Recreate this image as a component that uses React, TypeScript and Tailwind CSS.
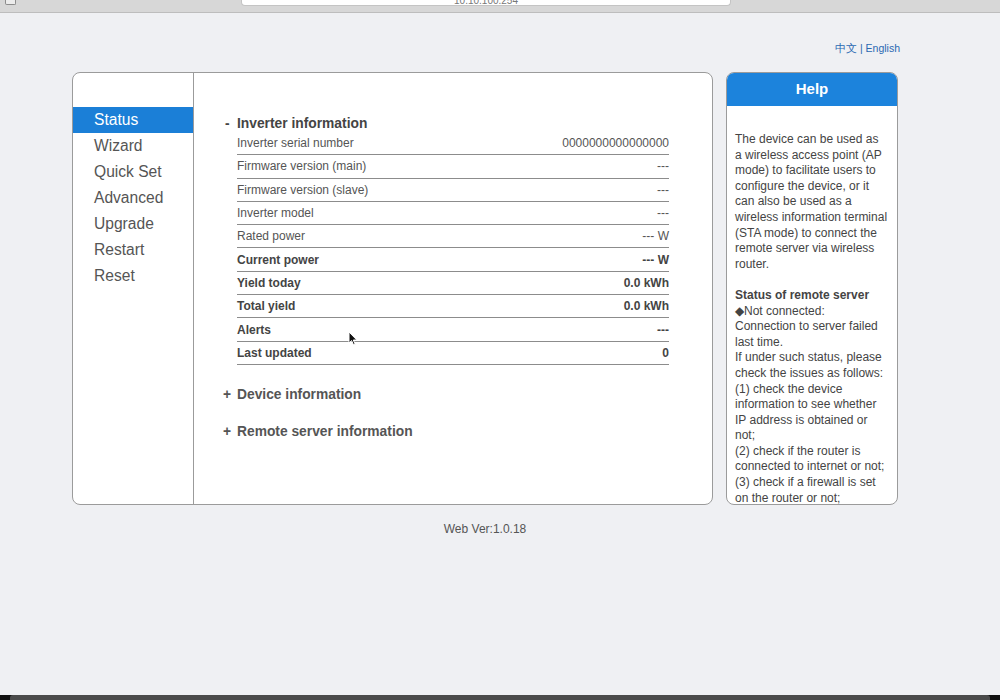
import React from 'react'

const menu = ['Status', 'Wizard', 'Quick Set', 'Advanced', 'Upgrade', 'Restart', 'Reset']

const rows: { label: string; value: string; bold?: boolean }[] = [
  { label: 'Inverter serial number', value: '0000000000000000' },
  { label: 'Firmware version (main)', value: '---' },
  { label: 'Firmware version (slave)', value: '---' },
  { label: 'Inverter model', value: '---' },
  { label: 'Rated power', value: '--- W' },
  { label: 'Current power', value: '--- W', bold: true },
  { label: 'Yield today', value: '0.0 kWh', bold: true },
  { label: 'Total yield', value: '0.0 kWh', bold: true },
  { label: 'Alerts', value: '---', bold: true },
  { label: 'Last updated', value: '0', bold: true },
]

const helpLines: { text: string; bold?: boolean }[] = [
  { text: 'The device can be used as' },
  { text: 'a wireless access point (AP' },
  { text: 'mode) to facilitate users to' },
  { text: 'configure the device, or it' },
  { text: 'can also be used as a' },
  { text: 'wireless information terminal' },
  { text: '(STA mode) to connect the' },
  { text: 'remote server via wireless' },
  { text: 'router.' },
  { text: '\u00a0' },
  { text: 'Status of remote server', bold: true },
  { text: '\u25c6Not connected:' },
  { text: 'Connection to server failed' },
  { text: 'last time.' },
  { text: 'If under such status, please' },
  { text: 'check the issues as follows:' },
  { text: '(1) check the device' },
  { text: 'information to see whether' },
  { text: 'IP address is obtained or' },
  { text: 'not;' },
  { text: '(2) check if the router is' },
  { text: 'connected to internet or not;' },
  { text: '(3) check if a firewall is set' },
  { text: 'on the router or not;' },
]

const BrowserBar = () => (
  <div className="h-[13px] shrink-0 bg-[#d7d7d7] border-b border-[#bdbdbd] flex items-start">
    <div className="ml-[5px] w-[11px] h-[5px] border border-t-0 border-[#8c8c8c] rounded-b-[2px] bg-[#ececec]" />
    <div className="ml-[225px] w-[490px] h-[6px] bg-white border border-t-0 border-[#c4c4c4] rounded-b-[4px] flex justify-center overflow-hidden">
      <span className="text-[10px] leading-[4px] text-[#777] -mt-[1px]">10.10.100.254</span>
    </div>
  </div>
)

const Cursor = () => (
  <svg className="absolute left-[348px] top-[331px]" width="10" height="15" viewBox="0 0 10 15">
    <path d="M1 1 L1 12 L3.6 9.6 L5.6 14 L7.2 13.3 L5.3 9 L8.8 9 Z" fill="#111" stroke="#fff" strokeWidth="1" />
  </svg>
)

export default function App() {
  return (
    <div className="relative w-[1000px] h-[700px] overflow-hidden bg-[#eff0f3] flex flex-col font-['Liberation_Sans',Arial,sans-serif]">
      <BrowserBar />

      <div className="flex-1">
        <div className="ml-[72px] w-[826px] pt-[28px]">
          <div className="flex justify-end -mr-[2px] text-[10.5px] leading-[14px] text-[#2a68b2]">
            <span>中文 | English</span>
          </div>

          <div className="mt-[17px] flex gap-[13px] h-[433px]">
            {/* main panel */}
            <div className="w-[641px] bg-white border border-[#9b9b9b] rounded-[8px] flex overflow-hidden">
              <div className="w-[121px] border-r border-[#9b9b9b] pt-[34px]">
                {menu.map((m, i) => (
                  <div
                    key={m}
                    className={`h-[26px] pl-[21px] text-[15.6px] leading-[26px] ${i === 0 ? 'bg-[#1b7fd7] text-white' : 'text-[#555]'}`}
                  >
                    {m}
                  </div>
                ))}
              </div>

              <div className="flex-1 pt-[42px]">
                <div className="flex text-[13.8px] leading-[17px] font-bold text-[#444]">
                  <span className="w-[43px] pl-[31px]">-</span>
                  <span>Inverter information</span>
                </div>
                <div className="ml-[43px] w-[432px]">
                  {rows.map((r) => (
                    <div
                      key={r.label}
                      className={`h-[23.3px] flex items-center justify-between border-b border-[#8c8c8c] text-[12px] ${r.bold ? 'font-bold text-[#444]' : 'text-[#555]'}`}
                    >
                      <span>{r.label}</span>
                      <span>{r.value}</span>
                    </div>
                  ))}
                </div>

                <div className="mt-[21px] flex text-[13.8px] leading-[17px] font-bold text-[#555]">
                  <span className="w-[43px] pl-[29px]">+</span>
                  <span>Device information</span>
                </div>
                <div className="mt-[20px] flex text-[13.8px] leading-[17px] font-bold text-[#555]">
                  <span className="w-[43px] pl-[29px]">+</span>
                  <span>Remote server information</span>
                </div>
              </div>
            </div>

            {/* help panel */}
            <div className="w-[172px] bg-white border border-[#9b9b9b] rounded-[8px] overflow-hidden flex flex-col">
              <div className="h-[33px] shrink-0 bg-[#1c83dc] text-white text-[15px] font-bold flex items-center justify-center">
                Help
              </div>
              <div className="flex-1 overflow-hidden pt-[26px] pl-[8px] text-[12px] leading-[15.6px] text-[#444]">
                {helpLines.map((l, i) => (
                  <div key={i} className={`whitespace-nowrap ${l.bold ? 'font-bold' : ''}`}>
                    {l.text}
                  </div>
                ))}
              </div>
            </div>
          </div>

          <div className="mt-[17px] text-center text-[12px] leading-[14px] text-[#555]">Web Ver:1.0.18</div>
        </div>
      </div>

      <div className="h-[5px] shrink-0 bg-[#111] px-[10px]">
        <div className="h-full bg-[#4a4a4a] rounded-t-[3px]" />
      </div>

      <Cursor />
    </div>
  )
}
